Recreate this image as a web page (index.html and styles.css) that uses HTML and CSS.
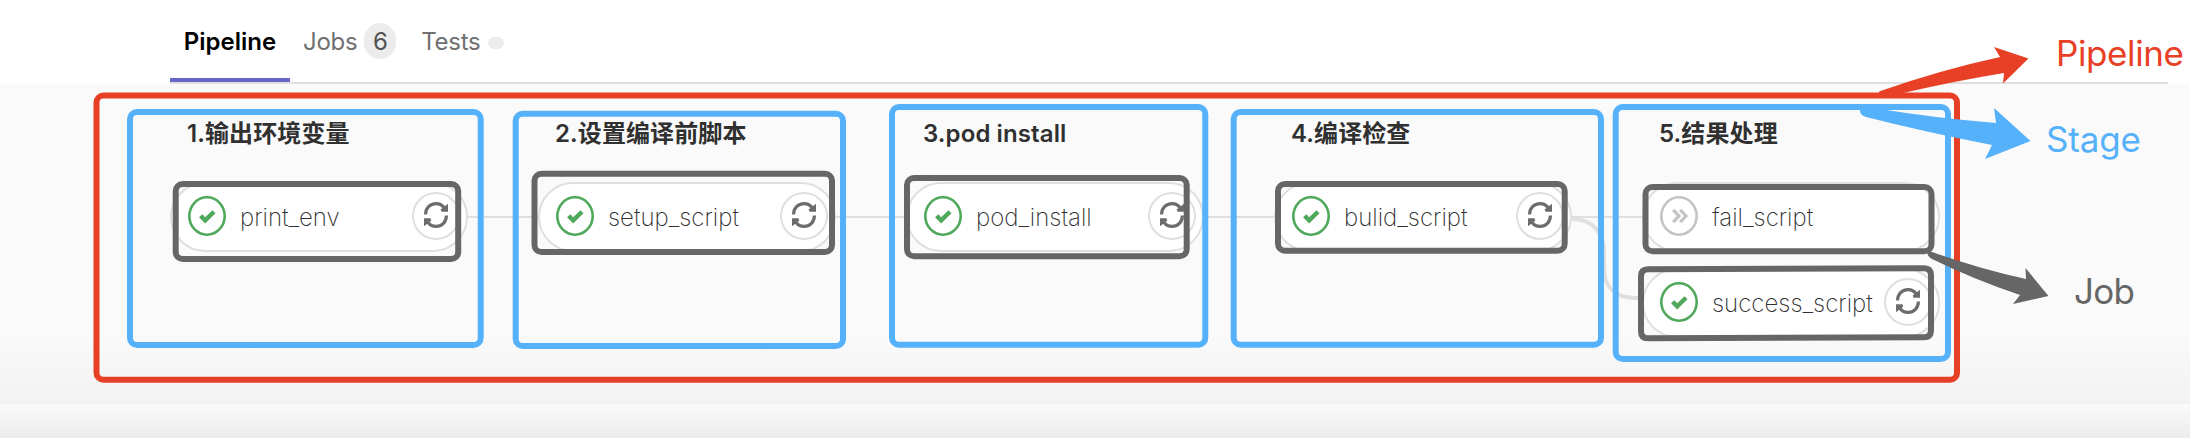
FILE: index.html
```html
<!DOCTYPE html>
<html lang="zh-CN">
<head>
<meta charset="utf-8">
<title>Pipeline</title>
<link rel="stylesheet" href="styles.css">
</head>
<body>
<svg class="defs" aria-hidden="true">
  <symbol id="ok" viewBox="0 0 38 40">
    <ellipse cx="19" cy="20" rx="17.7" ry="18.7" fill="none" stroke="currentColor" stroke-width="2.6"/>
    <path d="M12.600 19.800l4.600 4.600 8.800-8.600" fill="none" stroke="currentColor" stroke-width="4.400"/>
  </symbol>
  <symbol id="skip" viewBox="0 0 38 40">
    <ellipse cx="19" cy="20" rx="17.7" ry="18.7" fill="none" stroke="currentColor" stroke-width="2.6"/>
    <path d="M13.200 13.800l5.800 6.200-5.800 6.200M20.200 13.800l5.800 6.200-5.800 6.200" fill="none" stroke="currentColor" stroke-width="3.200"/>
  </symbol>
  <symbol id="retry" viewBox="0 0 24 26">
    <path d="M1.600 12.500C1.600 6 6 1.600 12 1.600c3.700 0 6.500 1.700 8.200 4.300M22.400 13.500C22.400 20 18 24.400 12 24.400c-3.700 0-6.500-1.700-8.200-4.300" fill="none" stroke="currentColor" stroke-width="3.200"/>
    <path d="M24 1.800V9.800h-6.500l-.8-2.200zM0 24.200v-8h6.500l.8 2.200z" fill="currentColor"/>
  </symbol>
</svg>
<nav class="tabs">
  <a class="tab active">Pipeline</a>
  <a class="tab jobs">Jobs <span class="badge">6</span></a>
  <a class="tab tests">Tests <span class="badge empty"></span></a>
</nav>
<main class="graph">
  <section class="stage">
    <h2>1.输出环境变量</h2>
    <div class="job"><svg class="status ok"><use href="#ok"/></svg><span class="name">print_env</span><button class="retry"><svg><use href="#retry"/></svg></button></div>
  </section>
  <section class="stage">
    <h2>2.设置编译前脚本</h2>
    <div class="job"><svg class="status ok"><use href="#ok"/></svg><span class="name">setup_script</span><button class="retry"><svg><use href="#retry"/></svg></button></div>
  </section>
  <section class="stage">
    <h2>3.pod install</h2>
    <div class="job"><svg class="status ok"><use href="#ok"/></svg><span class="name">pod_install</span><button class="retry"><svg><use href="#retry"/></svg></button></div>
  </section>
  <section class="stage">
    <h2>4.编译检查</h2>
    <div class="job"><svg class="status ok"><use href="#ok"/></svg><span class="name">bulid_script</span><button class="retry"><svg><use href="#retry"/></svg></button></div>
  </section>
  <section class="stage">
    <h2>5.结果处理</h2>
    <div class="job"><svg class="status skip"><use href="#skip"/></svg><span class="name">fail_script</span></div>
    <div class="job"><svg class="status ok"><use href="#ok"/></svg><span class="name">success_script</span><button class="retry"><svg><use href="#retry"/></svg></button></div>
  </section>
</main>
<footer class="strip"></footer>
<svg class="notes" viewBox="0 0 2190 438">
  <g fill="none" stroke="#dfdfdf">
    <path stroke-width="2" d="M468 217H538M836 217H906M1204 217H1274M1572 217H1642"/>
    <path stroke-width="4" d="M1572 219C1592 219 1604 232 1604 252V268C1604 288 1616 298 1636 298H1642"/>
  </g>
  <g class="frame job-frame">
    <rect x="175.700" y="184" width="282.500" height="75" rx="7"/>
    <rect x="534.500" y="173.700" width="297.500" height="78.300" rx="7"/>
    <rect x="907" y="178" width="279.700" height="78.300" rx="7"/>
    <rect x="1278" y="184" width="286.700" height="66.700" rx="7"/>
    <rect x="1645.500" y="187" width="286" height="64.300" rx="7"/>
    <path d="M1648 269.300L1924 268.300Q1931 268.300 1931 275.300V330.300Q1931 337.300 1924 337.300L1648 338.300Q1641 338.300 1641 331.300V276.300Q1641 269.300 1648 269.300Z"/>
  </g>
  <g class="frame pipeline-frame">
    <rect x="96.500" y="95.500" width="1860.500" height="284.200" rx="7"/>
  </g>
  <g class="frame stage-frame">
    <rect x="130" y="112" width="350.700" height="233" rx="7"/>
    <rect x="515.700" y="113.700" width="327.300" height="232.300" rx="7"/>
    <rect x="892" y="107" width="313.300" height="237.700" rx="7"/>
    <rect x="1233.700" y="112" width="367.300" height="232.700" rx="7"/>
    <rect x="1615.700" y="107" width="332.300" height="252" rx="7"/>
  </g>
  <path fill="#e84026" d="M1879 91.500Q1940 70 2000 57L1994 47 2028.500 58.500 2003 83.500 2004 73Q1955 81 1903 93L1880 95z"/>
  <path fill="#56b1fb" d="M1860 109H1880Q1935 118 1996 123L1994 108 2030.500 141 1985 159 1992 145Q1925 132 1866 117 1859 115 1860 109z"/>
  <path fill="#666" d="M1932 252Q1980 269 2026 279L2025.500 268 2048.500 296 2013 304 2020 295Q1975 280 1931 258.500 1926 255 1928 251z"/>
  <g class="label">
    <text x="2056" y="66" fill="#e84026" textLength="128">Pipeline</text>
    <text x="2046" y="152" fill="#56b1fb" textLength="95">Stage</text>
    <text x="2074" y="304" fill="#666" textLength="61">Job</text>
  </g>
</svg>
</body>
</html>
```
FILE: styles.css
```css
* { box-sizing: border-box; }
body {
  margin: 0;
  width: 2190px;
  height: 438px;
  overflow: hidden;
  position: relative;
  display: flex;
  flex-direction: column;
  background: #fff;
  font-family: Inter, "Noto Sans CJK SC", sans-serif;
  font-size: 24px;
}
.defs { display: none; }
.tabs {
  flex: none;
  height: 84px;
  margin: 0 22px 0 170px;
  border-bottom: 2px solid #dfdfdf;
  display: flex;
}
.tab {
  display: flex;
  align-items: center;
  height: 82px;
  color: #707070;
  white-space: nowrap;
}
.tab.active {
  width: 120px;
  justify-content: center;
  border-bottom: 4px solid #6666c4;
  padding-top: 4px;
  color: #000;
  font-weight: 600;
}
.jobs { padding-left: 13px; gap: 7px; letter-spacing: -.3px; }
.tests { padding-left: 25px; gap: 8px; letter-spacing: -.3px; }
.badge {
  width: 32px;
  height: 36px;
  border-radius: 16px;
  background: #ececec;
  color: #525252;
  display: flex;
  align-items: center;
  justify-content: center;
}
.badge.empty { width: 16px; height: 12px; border-radius: 6px; margin-top: 4px; }
.graph {
  flex: none;
  height: 320px;
  padding: 26px 0 0 170px;
  display: grid;
  grid-template-columns: repeat(5, 298px);
  column-gap: 70px;
  align-content: start;
  background: linear-gradient(#fafafa 78%, #f2f2f2);
}
.stage { display: flex; flex-direction: column; gap: 16px; }
.stage h2 {
  margin: 0 0 8px;
  height: 48px;
  padding-left: 17px;
  line-height: 48px;
  font-size: 24px;
  font-weight: 600;
  letter-spacing: .1px;
  color: #303030;
  white-space: nowrap;
}
.job {
  height: 70px;
  padding: 0 6px 2px 16px;
  border: 2px solid #dfdfdf;
  border-radius: 35px;
  background: #fff;
  display: flex;
  align-items: center;
}
.status { width: 38px; height: 40px; flex: none; }
.status.ok { color: #50a85b; }
.status.skip { color: #c4c4c4; }
.name {
  flex: 1;
  margin-left: 14px;
  padding-top: 3px;
  font-weight: 250;
  color: #303030;
  white-space: nowrap;
}
.retry {
  width: 48px;
  height: 48px;
  padding: 0 0 2px;
  border: 2px solid #dfdfdf;
  border-radius: 50%;
  background: #fff;
  color: #6c6c6c;
  display: flex;
  align-items: center;
  justify-content: center;
}
.retry svg { width: 24px; height: 26px; }
.strip { flex: 1; background: linear-gradient(#fafafa, #ececec); }
.notes { position: absolute; left: 0; top: 0; width: 2190px; height: 438px; }
.frame { fill: none; stroke-width: 6px; }
.job-frame { stroke: #666; }
.pipeline-frame { stroke: #e84026; }
.stage-frame { stroke: #56b1fb; }
.label { font-size: 35px; font-weight: 380; }
```
